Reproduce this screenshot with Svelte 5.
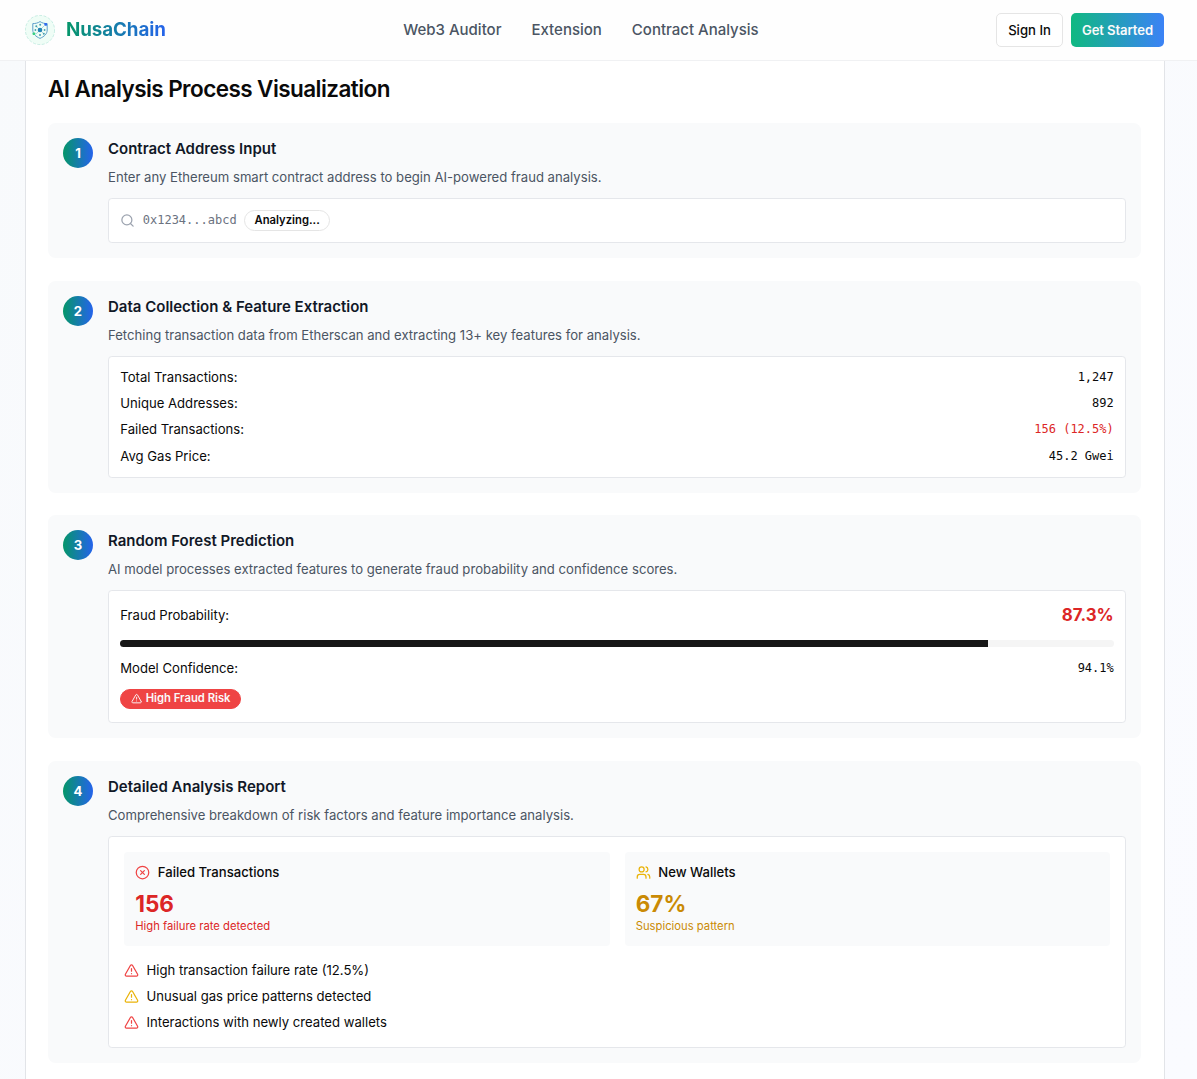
<script>
  const navLinks = ['Web3 Auditor', 'Extension', 'Contract Analysis'];
  const features = [
    { label: 'Total Transactions:', value: '1,247' },
    { label: 'Unique Addresses:', value: '892' },
    { label: 'Failed Transactions:', value: '156 (12.5%)', danger: true },
    { label: 'Avg Gas Price:', value: '45.2 Gwei' }
  ];
  const fraudProbability = 87.3;
  const findings = [
    { text: 'High transaction failure rate (12.5%)', tone: 'red' },
    { text: 'Unusual gas price patterns detected', tone: 'yellow' },
    { text: 'Interactions with newly created wallets', tone: 'red' }
  ];
</script>

{#snippet warning(tone)}
  <svg class="icon {tone}" viewBox="0 0 24 24">
    <path d="m21.73 18-8-14a2 2 0 0 0-3.48 0l-8 14A2 2 0 0 0 4 21h16a2 2 0 0 0 1.73-3" />
    <path d="M12 9v4" /><path d="M12 17h.01" />
  </svg>
{/snippet}

{#snippet heading(title, text)}
  <h3>{title}</h3>
  <p class="desc">{text}</p>
{/snippet}

<header>
  <div class="brand">
    <svg class="logo" viewBox="0 0 30 30">
      <circle class="logo-bg" cx="15" cy="15" r="14.6" />
      <path class="shield" d="M15 6.600c-2.200 1.500-4.600 2-7.200 2v6.400c0 3.900 2.900 6.500 7.200 8.400 4.300-1.900 7.200-4.500 7.200-8.400v-6.400c-2.600 0-5-.5-7.200-2z" />
      <path class="mesh" d="m11 11 8 8m0-8-8 8" />
      <circle class="core" cx="15" cy="15" r="2.300" />
      <g class="nodes">
        <circle cx="11.300" cy="11.300" r="1" /><circle cx="15.200" cy="9.800" r="1" />
        <circle cx="10.400" cy="15" r="0.9" /><circle cx="19.600" cy="15" r="0.9" />
        <circle cx="15" cy="20" r="1" /><circle cx="18.800" cy="18.800" r="1" />
      </g>
      <rect class="dot-blue" x="19.300" y="8" width="2.700" height="2.700" rx="0.6" />
      <rect class="dot-green" x="7.600" y="17.400" width="2.700" height="2.700" rx="0.8" />
    </svg>
    <span class="name">NusaChain</span>
  </div>
  <nav>
    {#each navLinks as link}<span>{link}</span>{/each}
  </nav>
  <div class="actions">
    <button class="sign-in">Sign In</button>
    <button class="start">Get Started</button>
  </div>
</header>

<main>
  <h2>AI Analysis Process Visualization</h2>
  <div class="steps">
    <section class="step">
      <div class="num">1</div>
      <div class="body">
        {@render heading('Contract Address Input', 'Enter any Ethereum smart contract address to begin AI-powered fraud analysis.')}
        <div class="box search">
          <svg class="icon gray" viewBox="0 0 24 24"><circle cx="11" cy="11" r="8" /><path d="m21 21-4.300-4.300" /></svg>
          <span class="mono address">0x1234...abcd</span>
          <span class="badge outline">Analyzing...</span>
        </div>
      </div>
    </section>

    <section class="step">
      <div class="num">2</div>
      <div class="body">
        {@render heading('Data Collection & Feature Extraction', 'Fetching transaction data from Etherscan and extracting 13+ key features for analysis.')}
        <div class="box rows">
          {#each features as f}
            <div class="row"><span>{f.label}</span><span class="mono" class:danger={f.danger}>{f.value}</span></div>
          {/each}
        </div>
      </div>
    </section>

    <section class="step">
      <div class="num">3</div>
      <div class="body">
        {@render heading('Random Forest Prediction', 'AI model processes extracted features to generate fraud probability and confidence scores.')}
        <div class="box prediction">
          <div class="row score"><span>Fraud Probability:</span><strong>{fraudProbability}%</strong></div>
          <div class="track"><div class="fill" style="width: {fraudProbability}%"></div></div>
          <div class="row"><span>Model Confidence:</span><span class="mono">94.1%</span></div>
          <div class="badge-line"><span class="badge risk">{@render warning('small')}High Fraud Risk</span></div>
        </div>
      </div>
    </section>

    <section class="step">
      <div class="num">4</div>
      <div class="body">
        {@render heading('Detailed Analysis Report', 'Comprehensive breakdown of risk factors and feature importance analysis.')}
        <div class="box report">
          <div class="stats">
            <div class="stat danger">
              <div class="stat-head">
                <svg class="icon red" viewBox="0 0 24 24"><circle cx="12" cy="12" r="10" /><path d="m15 9-6 6" /><path d="m9 9 6 6" /></svg>
                <span>Failed Transactions</span>
              </div>
              <div class="stat-value">156</div>
              <div class="stat-note">High failure rate detected</div>
            </div>
            <div class="stat amber">
              <div class="stat-head">
                <svg class="icon yellow" viewBox="0 0 24 24"><path d="M16 21v-2a4 4 0 0 0-4-4H6a4 4 0 0 0-4 4v2" /><circle cx="9" cy="7" r="4" /><path d="M22 21v-2a4 4 0 0 0-3-3.870" /><path d="M16 3.130a4 4 0 0 1 0 7.750" /></svg>
                <span>New Wallets</span>
              </div>
              <div class="stat-value">67%</div>
              <div class="stat-note">Suspicious pattern</div>
            </div>
          </div>
          <div class="findings">
            {#each findings as f}
              <div class="finding">{@render warning(f.tone)}<span>{f.text}</span></div>
            {/each}
          </div>
        </div>
      </div>
    </section>
  </div>
</main>

<style>
  :global(html) { font-size: 15px; }
  :global(body) {
    height: 1079px;
    overflow: hidden;
    background: linear-gradient(135deg, #f8fafc, #fafbff);
    font-family: Inter, sans-serif;
    line-height: 1.5;
    color: #0a0a0a;
  }
  :global(*) { box-sizing: border-box; }
  header {
    height: 61px;
    padding: 0 33px 0 25px;
    border-bottom: 1px solid #f0f1f3;
    background: #fefefe;
    display: flex;
    align-items: center;
    justify-content: space-between;
  }
  .brand { display: flex; align-items: center; gap: 11px; }
  .logo { width: 30px; height: 30px; fill: none; }
  .logo-bg { fill: #effdf6; stroke: #b4e6da; stroke-width: 0.7; stroke-dasharray: 3 1.500; }
  .shield { stroke: #5d9fcb; stroke-width: 1; }
  .mesh { stroke: #8cc4d2; stroke-width: 0.7; }
  .core { fill: #2484b5; }
  .nodes { fill: #459fae; }
  .dot-blue { fill: #2f6bed; }
  .dot-green { fill: #37cf83; }
  .name {
    font-size: 1.25rem;
    line-height: 1.4;
    font-weight: 700;
    letter-spacing: -0.08px;
    background: linear-gradient(90deg, #059669, #2563eb);
    background-clip: text;
    color: transparent;
  }
  nav { display: flex; gap: 2rem; font-weight: 500; font-size: 1rem; color: #4b5563; }
  .actions { display: flex; gap: 8px; }
  button {
    height: 34px;
    padding: 0 11px;
    border: 1px solid #e5e5e5;
    border-radius: 5px;
    background: #fff;
    color: #0a0a0a;
    font: 500 0.875rem/1.400 Inter, sans-serif;
  }
  .sign-in { width: 67px; padding: 0; }
  .start { width: 93px; padding: 0; border: 0; background: linear-gradient(90deg, #10b981, #3b82f6); color: #fafafa; font-weight: 600; letter-spacing: -0.1px; }
  main {
    width: 1140px;
    height: 1018px;
    margin-left: 25px;
    padding: 13px 23px 0 22px;
    background: #fff;
    border: solid #e2e4e8;
    border-width: 0 1px;
  }
  h2 { margin: 0 0 19px; font-size: 1.500rem; line-height: 30px; font-weight: 600; letter-spacing: -0.025em; }
  .steps { display: flex; flex-direction: column; gap: 1.500rem; }
  .step { display: flex; gap: 1rem; padding: 1rem; border-radius: 7.500px; background: #f9fafb; }
  .num {
    flex: none;
    width: 2rem;
    height: 2rem;
    border-radius: 50%;
    background: linear-gradient(90deg, #059669, #2563eb);
    color: #fff;
    font-size: 0.875rem;
    font-weight: 700;
    line-height: 2rem;
    text-align: center;
  }
  .body { flex: 1; }
  h3 { margin: 0 0 0.5rem; font-size: 1rem; font-weight: 600; line-height: 1.5rem; color: #111827; }
  .desc { margin: 0 0 0.75rem; font-size: 0.875rem; line-height: 1.25rem; color: #4b5563; letter-spacing: 0.005px; }
  .box { border: 1px solid #e5e7eb; border-radius: 3.750px; background: #fff; padding: 0.75rem; font-size: 0.875rem; line-height: 1.25rem; }
  .icon { flex: none; width: 1rem; height: 1rem; fill: none; stroke: currentColor; stroke-width: 2; stroke-linecap: round; stroke-linejoin: round; }
  .gray { color: #9ca3af; }
  .red { color: #ef4444; }
  .yellow { color: #eab308; }
  .small { width: 0.75rem; height: 0.75rem; }
  .mono { font-family: "DejaVu Sans Mono", monospace; font-size: 12px; }
  .search { display: flex; align-items: center; gap: 0.5rem; }
  .address { color: #6b7280; }
  .badge { display: inline-flex; align-items: center; gap: 3.750px; border: 1px solid #e5e5e5; border-radius: 99px; padding: 1.875px 9.375px; font-size: 0.75rem; line-height: 1rem; font-weight: 600; }
  .risk { height: 20px; border-color: #ef4444; background: #ef4444; color: #fafafa; }
  .rows { display: flex; flex-direction: column; gap: 0.5rem; padding-top: 11.100px; padding-bottom: 11.400px; }
  .row { display: flex; justify-content: space-between; }
  .danger { color: #dc2626; }
  .amber { color: #ca8a04; }
  .prediction { display: flex; flex-direction: column; gap: 0.75rem; }
  .score { align-items: center; height: 1.700rem; }
  .score strong { font-size: 1.125rem; line-height: 1.75rem; font-weight: 700; color: #dc2626; }
  .track { height: 7px; margin-top: 0.7px; border-radius: 99px; background: #f5f5f5; overflow: hidden; }
  .fill { height: 100%; background: #171717; }
  .prediction .row:not(.score) { margin-top: 0.8px; }
  .badge-line { height: 22.500px; margin-top: -0.4px; display: flex; align-items: flex-start; }
  .report { padding: 1rem; }
  .stats { display: grid; grid-template-columns: 1fr 1fr; gap: 1rem; margin-bottom: 1rem; }
  .stat { padding: 0.75rem; border-radius: 3.750px; background: #f9fafb; }
  .stat-head { display: flex; align-items: center; gap: 0.5rem; margin-bottom: 7.200px; font-weight: 500; }
  .stat-head span { color: #0a0a0a; }
  .stat-value { font-size: 1.500rem; line-height: 2rem; font-weight: 700; }
  .stat-note { font-size: 0.75rem; line-height: 1rem; margin-bottom: 0.4px; }
  .findings { display: flex; flex-direction: column; gap: 0.5rem; }
  .finding { display: flex; align-items: center; gap: 0.5rem; }
</style>
